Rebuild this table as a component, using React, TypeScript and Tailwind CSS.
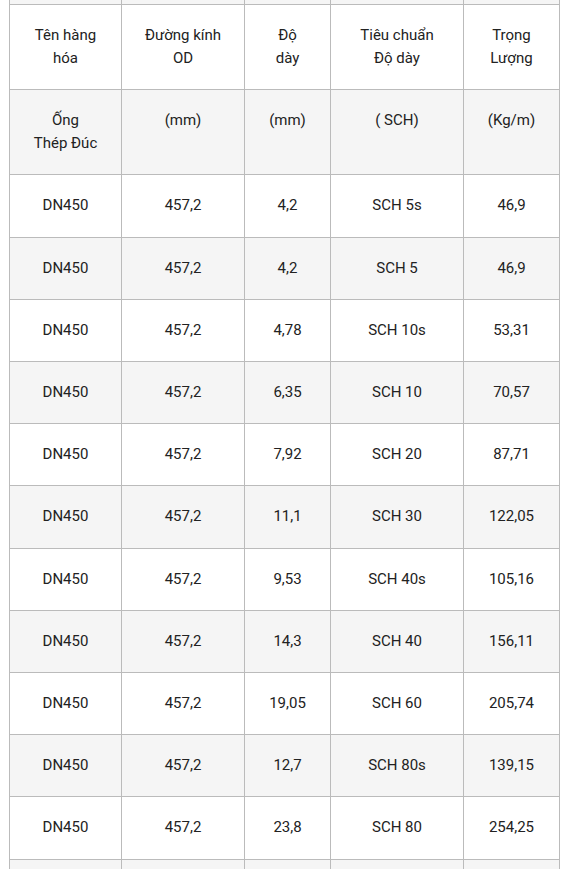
import React from "react";

const rows: [string, string, string, string, string][] = [
  ["DN450", "457,2", "4,2", "SCH 5s", "46,9"],
  ["DN450", "457,2", "4,2", "SCH 5", "46,9"],
  ["DN450", "457,2", "4,78", "SCH 10s", "53,31"],
  ["DN450", "457,2", "6,35", "SCH 10", "70,57"],
  ["DN450", "457,2", "7,92", "SCH 20", "87,71"],
  ["DN450", "457,2", "11,1", "SCH 30", "122,05"],
  ["DN450", "457,2", "9,53", "SCH 40s", "105,16"],
  ["DN450", "457,2", "14,3", "SCH 40", "156,11"],
  ["DN450", "457,2", "19,05", "SCH 60", "205,74"],
  ["DN450", "457,2", "12,7", "SCH 80s", "139,15"],
  ["DN450", "457,2", "23,8", "SCH 80", "254,25"],
];

const cell = "border border-[#bbbbbb] px-2 py-[19px] text-center align-top leading-[23.2px]";

export default function App() {
  return (
    <div
      className="bg-white w-[570px] h-[869px] overflow-hidden pl-[9px] text-[15px] text-[#222222]"
      style={{ fontFamily: "Roboto, 'Noto Sans', Arial, sans-serif" }}
    >
      <table className="table-fixed border-collapse w-[550px]">
        <colgroup>
          <col className="w-[112px]" />
          <col className="w-[123px]" />
          <col className="w-[86px]" />
          <col className="w-[133px]" />
          <col className="w-[96px]" />
        </colgroup>
        <tbody>
          <tr className="bg-[#f5f5f5]">
            {[0, 1, 2, 3, 4].map((i) => (
              <td key={i} className="border-x border-b border-[#bbbbbb] p-0 h-[4px]"></td>
            ))}
          </tr>
          <tr className="bg-white">
            <td className={cell}>Tên hàng<br />hóa</td>
            <td className={cell}>Đường kính<br />OD</td>
            <td className={cell}>Độ<br />dày</td>
            <td className={cell}>Tiêu chuẩn<br />Độ dày</td>
            <td className={cell}>Trọng<br />Lượng</td>
          </tr>
          <tr className="bg-[#f5f5f5]">
            <td className={cell}>Ống<br />Thép Đúc</td>
            <td className={cell}>(mm)</td>
            <td className={cell}>(mm)</td>
            <td className={cell}>( SCH)</td>
            <td className={cell}>(Kg/m)</td>
          </tr>
          {rows.map((r, i) => (
            <tr key={i} className={i % 2 === 0 ? "bg-white" : "bg-[#f5f5f5]"}>
              {r.map((v, j) => (
                <td key={j} className={cell}>{v}</td>
              ))}
            </tr>
          ))}
          <tr className="bg-[#f5f5f5]">
            {[0, 1, 2, 3, 4].map((i) => (
              <td key={i} className="border border-[#bbbbbb] p-0 h-[62px]"></td>
            ))}
          </tr>
        </tbody>
      </table>
    </div>
  );
}
